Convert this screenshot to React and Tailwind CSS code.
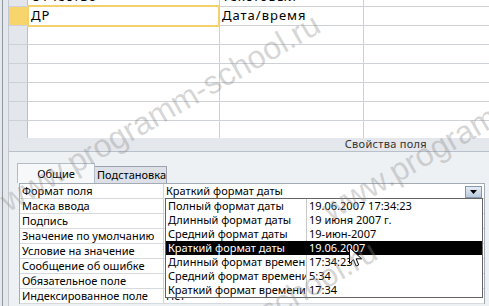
import React from 'react';

const tableRows = [
  { name: 'Отчество', type: 'Текстовый' },
  { name: 'ДР', type: 'Дата/время', active: true },
  {}, {}, {}, {}, {}, {},
];

const fieldProps = [
  ['Формат поля', 'Краткий формат даты'],
  ['Маска ввода', ''],
  ['Подпись', ''],
  ['Значение по умолчанию', ''],
  ['Условие на значение', ''],
  ['Сообщение об ошибке', ''],
  ['Обязательное поле', 'Нет'],
  ['Индексированное поле', 'Нет'],
];

const formats = [
  ['Полный формат даты', '19.06.2007 17:34:23'],
  ['Длинный формат даты', '19 июня 2007 г.'],
  ['Средний формат даты', '19-июн-2007'],
  ['Краткий формат даты', '19.06.2007', true],
  ['Длинный формат времени', '17:34:23'],
  ['Средний формат времени', '5:34'],
  ['Краткий формат времени', '17:34'],
];

const DropButton = () => (
  <div className="w-[17px] h-[12px] mr-[2px] mt-[1px] border border-[#8798ad] bg-gradient-to-b from-[#e4ecf6] to-[#b9c9dc] flex items-center justify-center">
    <svg width="7" height="4" viewBox="0 0 7 4">
      <path d="M0 0h7L3.5 4z" fill="#000" />
    </svg>
  </div>
);

const Cursor = () => (
  <svg className="absolute left-[349px] top-[247px]" width="13" height="21" viewBox="0 0 13 21">
    <path d="M0.5 0.5v16l4-3.8 2.6 6.3 2.6-1.1-2.6-6.1h5.5z" fill="#fff" stroke="#000" strokeWidth="1" strokeLinejoin="round" />
  </svg>
);

export default function App() {
  return (
    <div className="relative w-[489px] h-[306px] overflow-hidden bg-[#e4e7ec] font-['Noto_Sans',sans-serif] text-[11px] text-black">
      <div className="ml-[2px] h-full border-l border-[#8f979f] pl-[5px]">
        <div className="h-full border-l border-[#c2c8cf] flex flex-col">
          {/* field table */}
          <div className="h-[138px] shrink-0 overflow-hidden bg-white">
            <div className="-mt-[12px] text-[13px] tracking-[1px]">
              {tableRows.map((r, i) => (
                <div key={i} className="flex h-[19px] border-b border-[#cdd1d6]">
                  <div className={`w-[19px] border-r border-[#b9bfc7] ${r.active ? 'bg-[#f8d46c]' : 'bg-[#e3e6eb]'}`} />
                  <div className="relative w-[192px] border-r border-[#cdd1d6] pl-[3px] flex items-center">
                    {r.name}
                    {r.active && <span className="absolute -left-[1px] -top-[2px] -right-[1px] -bottom-[2px] border-2 border-[#f3d16b]" />}
                  </div>
                  <div className="w-[144px] border-r border-[#cdd1d6] pl-[2px] flex items-center">{r.type}</div>
                  <div className="flex-1" />
                </div>
              ))}
            </div>
          </div>

          {/* caption strip */}
          <div className="h-[13px] shrink-0 flex items-center justify-end pr-[62px] text-[#333] tracking-[0.3px]">Свойства поля</div>

          {/* properties panel */}
          <div className="flex-1 border-t border-[#b8c0ca] bg-[#eef1f4] pt-[11px]">
            <div className="flex items-end h-[20px] pl-[8px]">
              <div className="w-[78px] h-[20px] border-l border-t border-r border-[#b4bcc6] bg-[#f7f8fa] flex items-center justify-center pt-[2px]">Общие</div>
              <div className="w-[72px] h-[17px] border-t border-r border-[#9aa3ae] bg-[#dde1e7] flex items-center pl-[2px]">Подстановка</div>
            </div>

            <div className="relative ml-[10px] w-[466px] border-t border-l border-r border-[#a3abb5] bg-white">
              {fieldProps.map(([label, value], i) => (
                <div key={i} className="flex h-[15px] border-b border-[#d6d9dd]">
                  <div className="w-[144px] border-r border-[#d0d4d9] pl-[2px] flex items-center whitespace-nowrap">{label}</div>
                  <div className="flex-1 pl-[2px] flex items-center justify-between">
                    <span>{value}</span>
                    {i === 0 && <DropButton />}
                  </div>
                </div>
              ))}

              {/* open dropdown */}
              <div className="absolute left-[145px] top-[14px] w-[318px] h-[100px] border border-[#646464] bg-white">
                {formats.map(([name, sample, sel], i) => (
                  <div key={i} className={`flex h-[14px] items-center ${sel ? 'bg-black text-white' : ''}`}>
                    <div className={`w-[141px] h-full pl-[2px] flex items-center overflow-hidden whitespace-nowrap ${sel ? '' : 'border-r border-[#c9c9c9]'}`}>{name}</div>
                    <div className="pl-[2px] whitespace-nowrap">{sample}</div>
                  </div>
                ))}
              </div>
            </div>
          </div>
        </div>
      </div>

      <Cursor />

      {/* watermark */}
      <div className="pointer-events-none absolute inset-0 font-['Liberation_Sans',Arial,sans-serif] text-[32px] leading-none text-[#8a8a8a]/35 whitespace-nowrap">
        <span className="absolute left-[3px] top-[187px] origin-left rotate-[-30deg]">www.programm-school.ru</span>
        <span className="absolute left-[325px] top-[196px] origin-left rotate-[-30deg]">www.programm-school.ru</span>
        <span className="absolute left-[60px] top-[414px] origin-left rotate-[-30deg]">www.programm-school.ru</span>
      </div>
    </div>
  );
}
